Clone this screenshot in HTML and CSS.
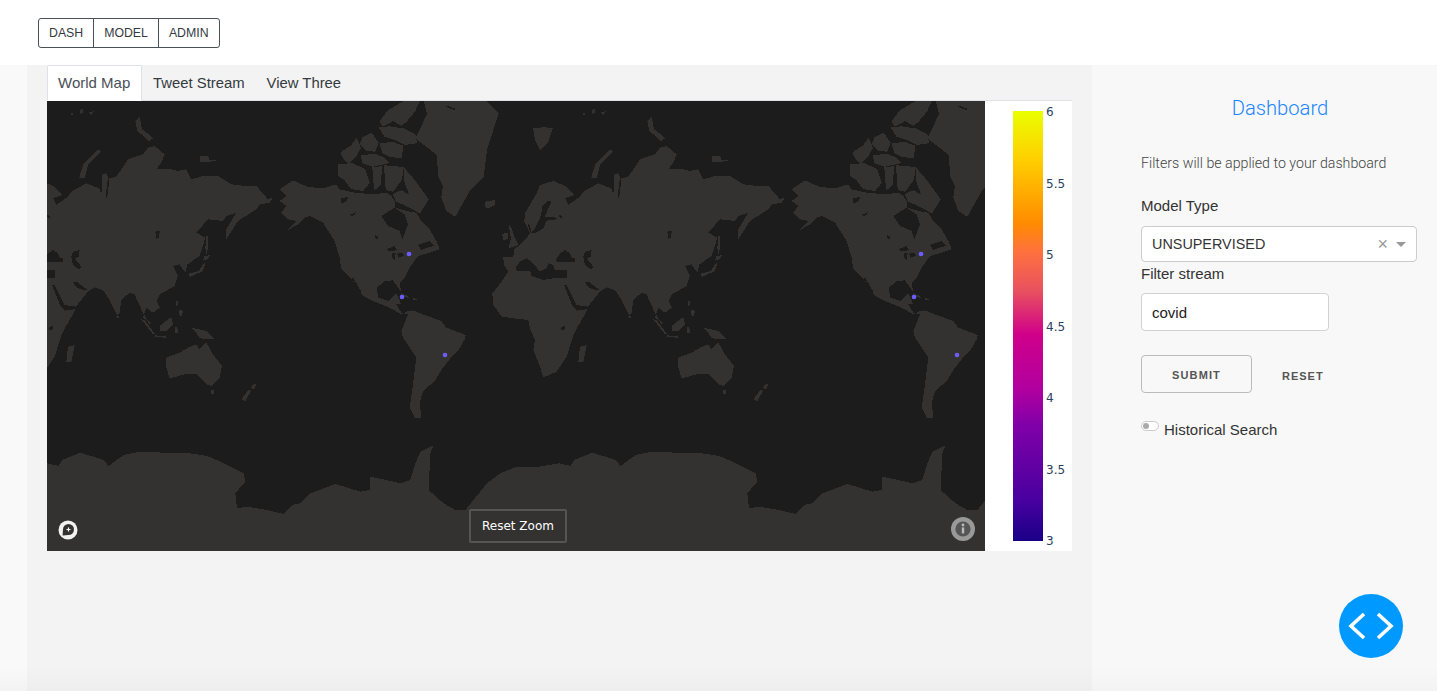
FILE: index.html
```html
<!DOCTYPE html>
<html lang="en">
<head>
  <meta charset="UTF-8" />
  <title>Dashboard</title>
  <link rel="stylesheet" href="styles.css">
</head>
<body>
  <div class="topbar">
    <div class="btn-group">
      <button class="nav-btn">DASH</button>
      <button class="nav-btn">MODEL</button>
      <button class="nav-btn">ADMIN</button>
    </div>
  </div>

  <div class="content">
    <div class="gutter"></div>

    <div class="main">
      <div class="tabs">
        <div class="tab active">World Map</div>
        <div class="tab">Tweet Stream</div>
        <div class="tab">View Three</div>
      </div>

      <div class="chart">
        <div class="map">
          <svg class="map-svg" viewBox="47 101 938 450" width="938" height="450">
            <defs>
              <g id="world">
                <!-- Europe, Asia, Africa -->
                <g transform="translate(485 150) scale(.33333)">
                  <g class="land">
                    <polygon points="57,345 55,322 85,320 88,298 120,270 135,250 118,215 120,190 155,130 165,105 205,93 245,110 268,135 240,145 250,165 285,140 295,125 340,100 385,118 385,75 398,70 410,85 430,80 445,58 465,28 510,13 525,-7 545,-12 575,13 565,38 550,58 595,58 615,63 640,58 655,88 690,78 735,78 775,103 815,108 850,108 885,148 900,143 890,158 860,163 850,178 795,213 760,268 760,238 790,188 760,198 750,213 705,208 670,248 697,263 680,318 643,343 637,368 620,343 600,348 615,378 605,408 560,433 550,453 560,473 540,488 520,473 510,503 535,518 528,522 505,478 485,433 470,428 445,450 440,490 433,497 410,450 390,420 365,412 345,425 310,468 305,483 270,545 260,570 245,620 215,665 175,682 165,650 145,600 150,570 135,535 130,510 85,505 50,500 25,465 22,430 50,395 70,365" />
                    <!-- islands -->
                    <polygon points="285,590 305,585 295,635 280,635" />
                    <polygon points="0,155 30,150 30,165 10,175 0,172" />
                    <polygon points="70,220 80,235 90,265 100,285 70,295 78,265" />
                    <polygon points="52,252 68,248 68,268 54,270" />
                    <polygon points="318,85 330,45 375,0 385,3 345,45 335,85" />
                    <polygon points="430,497 437,497 437,504 431,504" />
                    <polygon points="144,-66 178,-68 204,-66 189,-21 165,0 150,-30" />
                    <polygon points="290,-108 300,-112 298,-104" />
                    <polygon points="320,-118 328,-126 330,-112 322,-108" />
                    <polygon points="345,-112 362,-116 356,-106" />
                  </g>
                  <g class="water">
                    <polygon points="92,352 105,335 125,325 140,335 165,365 185,355 190,340 205,345 210,360 245,360 245,385 205,385 175,390 140,378 135,362 95,362" />
                    <polygon points="212,330 225,310 240,300 255,310 258,322 270,325 270,335 240,335 215,335" />
                    <polygon points="300,305 320,300 318,320 305,325 325,350 318,358 300,345 295,320" />
                    <polygon points="237,405 245,405 275,465 310,470 305,478 275,482 262,468" />
                    <polygon points="298,395 310,395 345,420 330,420 310,412" />
                    <polygon points="138,248 150,235 160,215 168,195 172,170 188,152 200,155 190,175 180,200 215,203 215,208 185,212 175,235 150,250" />
                    <polygon points="222,195 232,198 232,206 224,204" />
                    <polygon points="228,532 240,528 238,540 228,540" />
                    <polygon points="548,265 560,245 558,262 550,268" />
                    <path class="channel" d="M386 72 L384 125 M408 75 L400 145 M130 222 L138 245" />
                  </g>
                </g>

                <!-- far east, islands, Australia -->
                <g transform="translate(640 101) scale(.33333)">
                  <g class="land">
                    <polygon points="22,60 35,48 42,85 62,100 75,112 62,122 40,100 28,90" />
                    <polygon points="215,165 240,165 245,178 268,178 240,183 215,182" />
                    <polygon points="235,405 240,405 240,440 235,460 232,440" />
                    <polygon points="228,465 245,463 240,475 226,478" />
                    <polygon points="232,485 225,510 185,528 182,518 212,510 225,490" />
                    <polygon points="143,600 150,600 148,615 143,615" />
                    <polygon points="152,625 165,630 160,648 152,640" />
                    <polygon points="40,655 50,658 82,700 75,700" />
                    <polygon points="80,703 115,706 113,710 82,708" />
                    <polygon points="95,675 130,648 135,670 115,690 95,690" />
                    <polygon points="140,680 148,678 150,695 142,695" />
                    <polygon points="190,680 235,690 262,715 215,712 205,695" />
                    <polygon points="115,770 155,755 180,740 205,730 215,745 235,725 255,760 282,795 275,830 250,855 235,850 205,820 170,820 125,832 115,800" />
                    <polygon points="248,867 258,867 258,878 249,878" />
                    <polygon points="340,895 362,865 368,872 352,900" />
                    <polygon points="372,852 385,848 378,865 370,862" />
                  </g>
                  <polygon class="water" points="82,392 96,390 92,405 84,410" />
                </g>

                <!-- Americas and Greenland -->
                <g transform="translate(785 101) scale(.33333)">
                  <g class="land">
                    <polygon points="20,265 60,238 105,258 150,262 190,250 200,265 245,275 300,280 340,275 355,285 365,300 365,320 400,330 430,335 445,360 470,385 490,420 500,445 470,455 435,465 410,500 395,530 380,545 385,575 375,560 360,538 335,540 312,560 315,590 345,600 370,578 385,610 370,610 385,635 405,640 385,690 390,710 430,770 420,850 410,920 425,950 445,950 440,905 450,870 485,840 510,800 530,775 555,750 575,715 578,702 520,680 505,660 450,640 420,628 400,632 385,640 350,620 300,600 270,585 240,540 205,505 200,470 185,420 150,365 110,345 95,350 75,370 40,390 70,360 45,355 25,335 40,315 20,300 40,285" />
                    <!-- Greenland -->
                    <polygon points="452,0 642,0 677,37 642,147 632,227 592,267 547,347 520,330 505,290 510,255 495,225 492,162 427,112 462,40" />
                    <polygon points="385,577 405,585 410,592 385,584" />
                    <polygon points="420,592 434,593 430,597 420,596" />
                  </g>
                  <!-- arctic islands -->
                  <g class="land islands">
                    <polygon points="345,30 395,0 438,0 425,30 400,60 385,72 360,58 330,75 322,62" />
                    <polygon points="320,80 350,78 395,85 425,100 430,125 395,130 365,115 335,105" />
                    <polygon points="205,155 235,135 250,115 262,140 248,165 228,185 212,172" />
                    <polygon points="270,110 295,98 315,125 305,150 280,148 262,130" />
                    <polygon points="322,128 360,125 388,135 385,170 350,165 330,155" />
                    <polygon points="265,165 305,160 330,170 345,185 300,195 270,185" />
                    <polygon points="198,192 235,188 275,205 288,245 270,268 235,262 215,235 198,225" />
                    <polygon points="300,200 325,198 322,250 305,265" />
                    <polygon points="335,195 390,200 385,235 360,270 340,265" />
                    <polygon points="395,205 425,240 465,295 440,335 405,315 370,300 362,280 385,270 412,285 395,240" />
                  </g>
                  <g class="water">
                    <polygon points="325,345 365,320 395,340 405,370 388,415 380,390 345,375" />
                    <polygon points="203,292 225,288 222,300 206,308" />
                    <polygon points="232,340 248,334 245,342 234,346" />
                    <polygon points="306,403 315,405 316,416 308,414" />
                    <polygon points="340,445 365,435 372,448 345,450" />
                    <polygon points="358,455 368,455 366,478 356,470" />
                    <polygon points="372,458 390,455 392,465 376,470" />
                    <polygon points="435,432 470,420 485,435 462,440 445,448 440,440" />
                    <path class="channel" d="M238 530 L262 572 M520 15 L545 25" />
                  </g>
                </g>

                <circle class="dot" cx="921" cy="254" r="2.3" />
                <circle class="dot" cx="914" cy="297" r="2.3" />
                <circle class="dot" cx="957" cy="355" r="2.3" />
              </g>

              <polygon id="ice" class="land" transform="translate(47 320) scale(.33333)" points="0,430 35,438 45,420 100,398 170,420 185,438 230,405 280,395 350,398 430,400 480,408 520,425 590,460 595,485 565,520 570,565 600,560 660,570 710,582 735,555 760,550 790,520 865,492 940,515 970,510 970,470 1040,485 1060,490 1090,480 1105,430 1120,395 1160,375 1150,400 1145,510 1190,550 1225,570 1255,570 1320,490 1360,460 1410,440 1470,441 1536,430 1536,700 0,700" />
            </defs>

            <use href="#world" />
            <use href="#world" x="-512" />
            <use href="#ice" />
            <use href="#ice" x="512" />
          </svg>

          <svg class="zoom-icon" viewBox="0 0 20 20" width="20" height="20">
            <circle cx="10" cy="10" r="9.5" fill="#f2f2f2" />
            <circle cx="10.5" cy="9.5" r="5.5" fill="#333230" />
            <polygon points="5,9.5 4.6,15.5 10.5,15" fill="#333230" />
            <path d="M8.5 9.5h4M10.5 7.5v4" stroke="#fff" stroke-width="1.2" />
          </svg>

          <button class="reset-zoom">Reset Zoom</button>

          <svg class="info-icon" viewBox="0 0 24 24" width="24" height="24">
            <circle cx="12" cy="12" r="12" fill="#999" />
            <circle cx="12" cy="12" r="7.6" fill="#555" />
            <rect x="10.8" y="10.4" width="2.4" height="6" fill="#bbb" />
            <circle cx="12" cy="8" r="1.4" fill="#bbb" />
          </svg>
        </div>

        <div class="colorbar">
          <div class="colorbar-ramp"></div>
          <div class="colorbar-ticks">
            <span>6</span>
            <span>5.5</span>
            <span>5</span>
            <span>4.5</span>
            <span>4</span>
            <span>3.5</span>
            <span>3</span>
          </div>
        </div>
      </div>
    </div>

    <div class="side">
      <h2 class="side-title">Dashboard</h2>
      <p class="side-note">Filters will be applied to your dashboard</p>

      <label class="field-label">Model Type</label>
      <div class="select">
        <span class="select-value">UNSUPERVISED</span>
        <span class="select-clear">&times;</span>
        <span class="select-arrow"></span>
      </div>

      <label class="field-label stream-label">Filter stream</label>
      <input class="text-input" type="text" value="covid">

      <div class="actions">
        <button class="submit">SUBMIT</button>
        <button class="reset">RESET</button>
      </div>

      <div class="toggle-row">
        <span class="toggle"><span class="toggle-knob"></span></span>
        <span class="toggle-label">Historical Search</span>
      </div>
    </div>
  </div>

  <div class="fab">
    <svg viewBox="0 0 64 64" width="64" height="64">
      <path d="M25 20 L12 32 L25 44 M39 20 L52 32 L39 44" fill="none" stroke="#fff" stroke-width="3.6" />
    </svg>
  </div>
</body>
</html>
```

FILE: styles.css
```css
* {
  margin: 0;
  padding: 0;
  box-sizing: border-box;
}
html, body {
  height: 100%;
  overflow: hidden;
}
body {
  font-family: "Liberation Sans", Arial, sans-serif;
  color: #333;
  background: #fff;
  display: flex;
  flex-direction: column;
}
.topbar {
  height: 65px;
  padding: 18px 0 0 38px;
  flex-shrink: 0;
}
.btn-group {
  display: inline-flex;
}
.nav-btn {
  height: 30px;
  padding: 0 10px;
  margin-left: -1px;
  font-family: inherit;
  font-size: 12.3px;
  color: #343a40;
  background: #fff;
  border: 1px solid #495057;
}
.nav-btn:first-child {
  margin-left: 0;
  border-radius: 3px 0 0 3px;
}
.nav-btn:last-child {
  border-radius: 0 3px 3px 0;
}

.content {
  flex: 1;
  display: grid;
  grid-template-columns: 27px 1065px 345px;
  min-height: 0;
}
.gutter {
  background: linear-gradient(to bottom, #f9f9f9 calc(100% - 25px), #f3f3f3);
}
.main {
  padding: 0 20px;
  background: linear-gradient(to bottom, #f3f3f3 calc(100% - 25px), #eeeeee);
}

.tabs {
  display: flex;
  height: 36px;
  border-bottom: 1px solid #dee2e6;
}
.tab {
  padding: 0 10px;
  font-size: 14.85px;
  line-height: 34px;
  color: #343a40;
  border: 1px solid transparent;
}
.tab.active {
  width: 95px;
  height: 36px;
  color: #495057;
  font-size: 15px;
  background: #fff;
  border-color: #dee2e6 #dee2e6 #fff;
  border-radius: 2px 2px 0 0;
}

.chart {
  display: flex;
  height: 450px;
}
.map {
  position: relative;
  width: 938px;
  height: 450px;
  background: #1b1c1b;
}
.map-svg {
  display: block;
}
.land {
  fill: #343230;
  shape-rendering: crispEdges;
}
.islands {
  stroke: #343230;
  stroke-width: 4;
}
.water {
  fill: #1b1c1b;
  shape-rendering: crispEdges;
}
.channel {
  fill: none;
  stroke: #1b1c1b;
  stroke-width: 5;
}
.dot {
  fill: #6a5cff;
}
.zoom-icon {
  position: absolute;
  left: 10.5px;
  bottom: 11px;
}
.reset-zoom {
  position: absolute;
  left: 422px;
  bottom: 8px;
  width: 98px;
  height: 34px;
  font-family: "DejaVu Sans", sans-serif;
  font-size: 12px;
  color: #fff;
  background: #333230;
  border: 2px solid #555;
  border-radius: 2px;
}
.info-icon {
  position: absolute;
  right: 10px;
  bottom: 10px;
}

.colorbar {
  flex: 1;
  display: flex;
  padding: 10px 0 10px 28px;
  background: #fff;
}
.colorbar-ramp {
  width: 30px;
  background: linear-gradient(to bottom, #eaff00 0%, #ffd000 11%, #ff8c00 26%, #ff7040 33%, #e85060 42%, #d0008a 52%, #b000a0 65%, #8000a8 73%, #4a00a0 90%, #1a0088 100%);
}
.colorbar-ticks {
  display: flex;
  flex-direction: column;
  justify-content: space-between;
  margin: -6px 0 -7px;
  padding-left: 3px;
  font-family: "DejaVu Sans", sans-serif;
  font-size: 12px;
  line-height: 14px;
  color: #2a3f5f;
}

.side {
  padding: 30px 20px 0 49px;
  background: linear-gradient(to bottom, #f8f8f8 calc(100% - 25px), #f3f3f3);
}
.side-title {
  margin-left: -49px;
  padding-left: 51px;
  font-family: Roboto, sans-serif;
  font-size: 20.2px;
  font-weight: 300;
  line-height: 26px;
  color: #1a85ff;
  text-align: center;
}
.side-note {
  margin-top: 33px;
  font-family: Roboto, sans-serif;
  font-size: 14.2px;
  font-weight: 300;
  line-height: 18px;
  color: #444;
}
.field-label {
  display: block;
  margin-top: 25px;
  font-size: 15px;
  line-height: 18px;
  color: #333;
}
.stream-label {
  margin-top: 3px;
}
.select {
  display: flex;
  align-items: center;
  width: 276px;
  height: 36px;
  margin-top: 11px;
  padding: 0 10px;
  background: #fff;
  border: 1px solid #ccc;
  border-radius: 4px;
}
.select-value {
  flex: 1;
  font-size: 14.4px;
  color: #333;
}
.select-clear {
  margin-right: 8px;
  font-size: 18px;
  line-height: 18px;
  color: #999;
}
.select-arrow {
  width: 0;
  height: 0;
  border-left: 5px solid transparent;
  border-right: 5px solid transparent;
  border-top: 5px solid #999;
}
.text-input {
  display: block;
  width: 188px;
  height: 38px;
  margin-top: 10px;
  padding: 0 10px;
  font-family: inherit;
  font-size: 15px;
  color: #222;
  background: #fff;
  border: 1px solid #d1d1d1;
  border-radius: 4px;
  outline: none;
}
.actions {
  display: flex;
  align-items: center;
  margin-top: 24px;
}
.submit, .reset {
  padding-top: 2px;
  font-family: inherit;
  font-size: 11px;
  font-weight: 700;
  letter-spacing: 1.1px;
  color: #555;
  background: transparent;
}
.submit {
  width: 111px;
  height: 38px;
  border: 1px solid #bbb;
  border-radius: 4px;
}
.reset {
  margin-left: 30px;
  padding-top: 3px;
  letter-spacing: 1px;
  border: none;
}
.toggle-row {
  display: flex;
  margin-top: 28px;
}
.toggle {
  display: block;
  width: 18px;
  height: 10px;
  padding: 1px;
  background: #fff;
  border: 1px solid #ccc;
  border-radius: 5px;
}
.toggle-knob {
  display: block;
  width: 6px;
  height: 6px;
  background: #aaa;
  border-radius: 50%;
}
.toggle-label {
  margin-left: 5px;
  font-size: 15px;
  line-height: 18px;
  color: #333;
}

.fab {
  position: fixed;
  left: 1339px;
  top: 594px;
  width: 64px;
  height: 64px;
  background: #0099ff;
  border-radius: 50%;
}
.fab svg {
  display: block;
}
```
